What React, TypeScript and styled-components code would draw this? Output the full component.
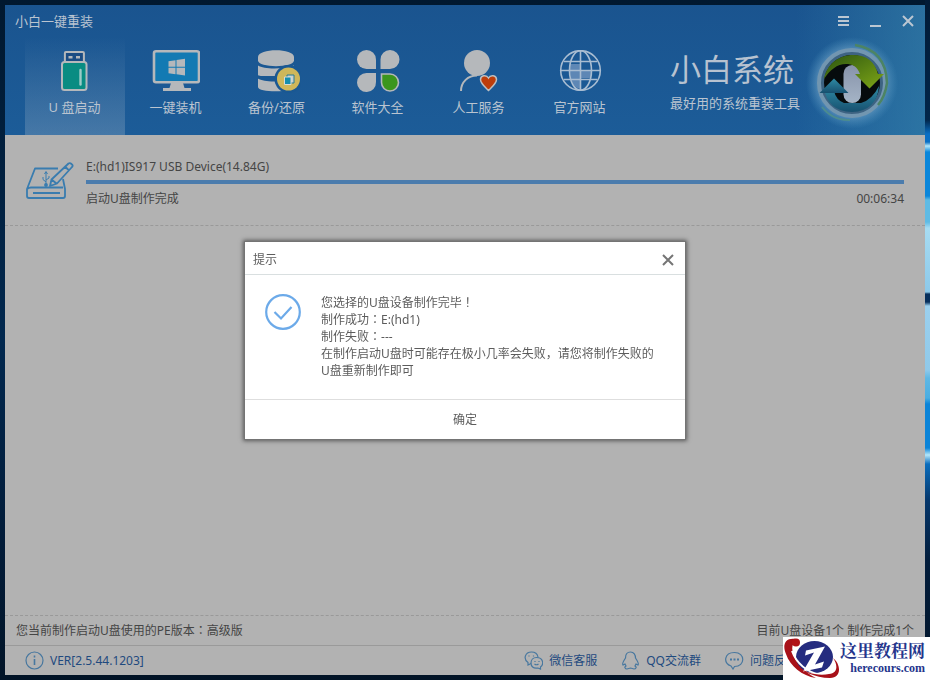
import React from 'react';
import styled, { createGlobalStyle } from 'styled-components';

const GlobalStyle = createGlobalStyle`
  * { box-sizing: border-box; }
  body {
    margin: 0;
    font-family: "Noto Sans", "Noto Sans CJK SC", sans-serif;
    font-size: 12px;
    line-height: 17px;
    color: #454545;
  }
  button { font: inherit; color: inherit; background: none; border: 0; padding: 0; cursor: pointer; }
  svg { display: block; flex: none; }
`;

const Desktop = styled.div`
  min-height: 100vh;
  display: flex;
  padding: 5px;
  background:
    linear-gradient(180deg, #021b36 0, #02264a 120px, #0a6fc4 134px, #0a6fc4 142px, #b5e8fb 146px, #0a86da 152px,
      #0a86da 196px, #5fbbe4 200px, #5fbbe4 222px, #a7dcf2 228px, #8cc9ea 292px, #062f5c 294px, #062f5c 302px,
      #9bd0ee 306px, #8fc9ea 370px, #5fb8e4 378px, #4aaee2 398px, #0b84d8 404px, #0b84d8 448px, #b5e8fb 455px,
      #0a6dbd 464px, #05376c 500px, #021d3c 560px, #021427 680px) right / 5px 100% no-repeat,
    linear-gradient(180deg, #01182f, #01284f 50%, #011b38 80%, #021427);
`;

const Window = styled.main`
  flex: 1;
  display: flex;
  flex-direction: column;
  background: #b2b2b2;
`;

const Header = styled.header`
  background: linear-gradient(90deg, transparent 86%, rgba(60, 140, 175, 0.5)), linear-gradient(180deg, #1a548f, #1c5c98);
  color: #bac4d0;
`;

const TitleBar = styled.div`
  display: flex;
  align-items: center;
  justify-content: space-between;
  height: 32px;
  padding: 0 9px 0 10px;
  font-size: 13px;
`;

const WindowButtons = styled.div`
  display: flex;
  gap: 16px;
`;

const IconButton = styled.button`
  width: 16px;
  height: 16px;
  display: grid;
  place-items: center;
`;

const HeaderMain = styled.div`
  display: flex;
  justify-content: space-between;
  padding: 0 25px 0 20px;
`;

const Nav = styled.nav`
  display: flex;
  gap: 1px;
`;

const NavButton = styled.button<{ $active?: boolean }>`
  width: 100px;
  height: 98px;
  padding: 13px 1px 0 0;
  display: flex;
  flex-direction: column;
  align-items: center;
  justify-content: flex-start;
  gap: 5px;
  font-size: 13px;
  line-height: 18px;
  background: ${p => (p.$active ? 'linear-gradient(180deg, rgba(190,200,210,0), rgba(190,200,210,0.26))' : 'none')};
`;

const Brand = styled.div`
  display: flex;
  gap: 2px;
`;

const BrandText = styled.div`
  padding-top: 13px;
`;

const BrandName = styled.div`
  font-size: 31px;
  line-height: 38px;
  color: #b7c2d0;
`;

const Slogan = styled.div`
  margin-top: 6px;
  font-size: 13px;
  line-height: 18px;
`;

const Device = styled.section`
  display: flex;
  gap: 12px;
  height: 91px;
  padding: 23px 21px 0 21px;
  border-bottom: 1px dashed #999;
`;

const DeviceIcon = styled.div`
  padding-top: 4px;
`;

const DeviceInfo = styled.div`
  flex: 1;
`;

const Progress = styled.progress`
  display: block;
  appearance: none;
  width: 100%;
  height: 4px;
  margin: 5px 0 6px;
  border: 0;
  &::-webkit-progress-bar { background: #999; }
  &::-webkit-progress-value { background: #4b7cad; }
`;

const Split = styled.div`
  display: flex;
  justify-content: space-between;
`;

const Workspace = styled.div`
  flex: 1;
`;

const StatusRow = styled(Split)`
  height: 31px;
  padding: 0 11px;
  align-items: center;
  border-top: 1px dashed #999;
  border-bottom: 1px solid #9a9a9a;
`;

const FullWidthMark = styled.span`
  font-family: "Noto Sans CJK JP", sans-serif;
  line-height: 1;
`;

const Footer = styled.footer`
  display: flex;
  justify-content: space-between;
  align-items: center;
  height: 29px;
  padding: 0 127px 0 20px;
  color: #1f4a7f;
`;

const FooterLinks = styled.div`
  display: flex;
  gap: 24px;
`;

const FooterLink = styled.a`
  display: flex;
  align-items: center;
  gap: 6px;
  color: inherit;
  text-decoration: none;
`;

const Overlay = styled.div`
  position: fixed;
  inset: 0;
  display: flex;
  align-items: center;
  justify-content: center;
  padding-top: 1px;
`;

const Dialog = styled.section`
  width: 442px;
  background: #fff;
  border: 1px solid #747474;
  box-shadow: 0 0 4px 1px rgba(0, 0, 0, 0.5);
  color: #5c5c5c;
`;

const DialogHeader = styled.div`
  display: flex;
  justify-content: space-between;
  align-items: center;
  height: 33px;
  padding: 3px 9px 0 8px;
  border-bottom: 1px solid #d9dfe0;
`;

const DialogTitle = styled.h2`
  margin: 0;
  font-size: 12px;
  font-weight: 400;
`;

const DialogBody = styled.div`
  display: flex;
  gap: 20px;
  padding: 19px 28px 20px 20px;
`;

const Message = styled.div`
  flex: 1;
`;

const Line = styled.p`
  margin: 0;
`;

const ConfirmButton = styled.button`
  display: block;
  width: 100%;
  height: 40px;
  border-top: 1px solid #dedede;
`;

const Watermark = styled.aside`
  position: fixed;
  right: 0;
  bottom: 0;
  display: flex;
  justify-content: space-between;
  width: 147px;
  height: 43px;
  padding-right: 5px;
  background: #fff;
  color: #24358c;
`;

const WatermarkText = styled.div`
  padding-top: 3px;
  display: flex;
  flex-direction: column;
  align-items: flex-end;
`;

const WatermarkName = styled.div`
  font: 700 17px/20px "Noto Serif CJK SC", "Noto Sans CJK SC", serif;
`;

const WatermarkUrl = styled.div`
  font: 700 12px/16px "Liberation Serif", serif;
`;

const NavSvg = ({ children }: { children: React.ReactNode }) => (
  <svg width="48" height="43" viewBox="0 0 48 43" fill="#b5b8bb">{children}</svg>
);

const UsbIcon = () => (
  <NavSvg>
    <rect x="13.9" y="2" width="19" height="12" rx="1" fill="#1b4c83" stroke="#b5b8bb" strokeWidth="2" />
    <rect x="17.5" y="6" width="4" height="2.5" /><rect x="25" y="6" width="4" height="2.5" />
    <rect x="11" y="12" width="24.5" height="28" rx="2.5" fill="#098c82" stroke="#b5b8bb" strokeWidth="2" />
    <path d="M29.5 20v14.5" stroke="#9ccbc7" strokeWidth="2.4" strokeLinecap="round" />
  </NavSvg>
);

const MonitorIcon = () => (
  <NavSvg>
    <rect x="2" y="1.3" width="45" height="31" rx="2" fill="#137ab3" stroke="#b5b8bb" strokeWidth="2.6" />
    <path d="M16.5 11.2l7-1v6.5h-7zM24.5 10l8.500-1.200v7.900h-8.500zM16.5 17.700h7v6.500l-7-1zM24.5 17.700H33v7.800l-8.500-1.200z" />
    <path d="M19 33h12l1.500 5H39v3H11v-3h6.500z" />
  </NavSvg>
);

const BackupIcon = () => (
  <NavSvg>
    <path d="M5 7c0-9 36-9 36 0v3.500c0 7.500-36 7.500-36 0z" />
    <path d="M5 15.500c6 4 25 4 36 0V26H5z" />
    <path d="M5 28.500c6 4 25 4 31 0v11.500c-8 2-31 2-31-3z" />
    <path d="M4 25q15 5.500 33 0v3q-18 5-33 0z" fill="#1a5893" />
    <circle cx="35.500" cy="29" r="14" fill="#1a5893" />
    <circle cx="35.500" cy="29" r="11.500" fill="#cfb75a" />
    <path d="M34 25h7v8h-7z" fill="#cbd1cd" stroke="#257b96" />
    <path d="M31.500 27h6.500v7.500h-6.500z" fill="#148eae" stroke="#d5dbd7" />
  </NavSvg>
);

const CloverIcon = () => (
  <NavSvg>
    <path d="M12.500 0a9.500 9.500 0 0 1 9.500 9.500V19h-9.500a9.500 9.500 0 0 1 0-19z" />
    <path d="M36 0a9.500 9.500 0 0 1 0 19h-9.500V9.500A9.500 9.500 0 0 1 36 0z" />
    <path d="M12.500 23H22v9a9.500 9.500 0 1 1-9.500-9z" />
    <path d="M27.500 24H36a8.500 8.500 0 1 1-8.500 8.500z" fill="#3b961e" stroke="#b5b8bb" strokeWidth="1.600" />
  </NavSvg>
);

const ServiceIcon = () => (
  <NavSvg>
    <circle cx="22" cy="13" r="13" />
    <path d="M6 41c0-9 7-15.500 16-15.500" fill="none" stroke="#b5b8bb" strokeWidth="2" />
    <path d="M33.500 40.500c-4-4-8-7-8-11 0-4.500 6-5 8-1.500 2-3.500 8-3 8 1.500 0 4-4 7-8 11z" fill="#bd3d0b" stroke="#bdbfc0" strokeWidth="1.500" />
  </NavSvg>
);

const GlobeIcon = () => (
  <NavSvg>
    <path d="M14 14h11v7h10v7H25v11c-7 0-12-9-11-25z" fill="#5e87b5" />
    <g fill="none" stroke="#a9bdd2" strokeWidth="1.600">
      <circle cx="24.500" cy="20.500" r="19.800" /><ellipse cx="24.500" cy="20.500" rx="11" ry="19.800" />
      <path d="M24.500 1v39M5 20.500h39M8 11.500h33M8 29.500h33" />
    </g>
  </NavSvg>
);

const BrandLogo = () => (
  <svg width="98" height="98" viewBox="0 4 98 98">
    <defs>
      <radialGradient id="halo">
        <stop offset="0.650" stopColor="#7fb0cf" stopOpacity="0.800" />
        <stop offset="0.780" stopColor="#6aa0c6" stopOpacity="0.500" />
        <stop offset="1" stopColor="#4e95c0" stopOpacity="0" />
      </radialGradient>
      <linearGradient id="leaf" x2="1" y2="1"><stop stopColor="#2b5510" /><stop offset="1" stopColor="#7fa617" /></linearGradient>
      <linearGradient id="sea" x2="0" y2="1"><stop stopColor="#2f8ba5" /><stop offset="1" stopColor="#17506f" /></linearGradient>
      <linearGradient id="zero" x2="0" y2="1"><stop stopColor="#8793aa" /><stop offset="1" stopColor="#a5b4c6" /></linearGradient>
    </defs>
    <circle cx="50" cy="50" r="46" fill="url(#halo)" />
    <circle cx="50" cy="50" r="33" fill="#3d6382" stroke="#7296b0" strokeWidth="4" />
    <path d="M53 12q31 5 32 38-2 14-9 22" fill="none" stroke="#4c8464" strokeWidth="2.500" />
    <path d="M20 74q11 14 28 13" fill="none" stroke="#4c8c8f" strokeWidth="2" />
    <circle cx="50" cy="50" r="28" fill="#060b0d" />
    <path d="M22 55q3 23 28 24 25-1 27-26-7 14-18 17H42q-8-3-10-12z" fill="url(#sea)" />
    <rect x="41.500" y="32" width="17.500" height="38" rx="8.700" fill="url(#zero)" />
    <path d="M32 45.500L17.500 60h29z" fill="url(#sea)" />
    <path d="M22 46c3-16 16-24 29-24 14 0 22 7 25 19h6L67.500 55.500 53 41h5c-3-8-8-10-14-10-9 0-16 6-22 15z" fill="url(#leaf)" />
  </svg>
);

const DriveIcon = () => (
  <svg width="48" height="40" viewBox="0 0 48 40" fill="none" stroke="#397caf" strokeWidth="1.800" strokeLinejoin="round">
    <path d="M32 6.500H9L1 27v7q0 2 2 2h34q2 0 2-2v-7L37 17M1 27q2-1.500 4-1.500h32M7 31h27" />
    <path d="M42.500 1.500q1.500-1 3 .5 2 1.500.5 3L31 21.500l-7 2.500 1.500-6.500zM39.500 5l4 4M25.500 17.500l5 4" />
    <path d="M20 23V10m-1.500 2l1.500-2.500 1.500 2.500M20 20l-3-2.500V15m3 3l3-2v-2" strokeWidth="1" />
    <circle cx="20" cy="23" r="1" />
  </svg>
);

const FooterSvg = ({ children }: { children: React.ReactNode }) => (
  <svg width="19" height="19" viewBox="0 0 19 19" fill="none" stroke="#47779f" strokeWidth="1.200">{children}</svg>
);

const CloseGlyph = ({ color }: { color: string }) => (
  <svg width="12" height="12" viewBox="0 0 12 12" stroke={color} strokeWidth="2"><path d="M1 1l10 10M11 1L1 11" /></svg>
);

const tools = [
  { label: 'U 盘启动', icon: <UsbIcon /> },
  { label: '一键装机', icon: <MonitorIcon /> },
  { label: '备份/还原', icon: <BackupIcon /> },
  { label: '软件大全', icon: <CloverIcon /> },
  { label: '人工服务', icon: <ServiceIcon /> },
  { label: '官方网站', icon: <GlobeIcon /> },
];

export default function App() {
  return (
    <>
      <GlobalStyle />
      <Desktop>
        <Window>
          <Header>
            <TitleBar>
              <span>小白一键重装</span>
              <WindowButtons>
                <IconButton aria-label="菜单">
                  <svg width="12" height="12" stroke="#bcc7d2" strokeWidth="2"><path d="M0 2h11M0 6h11M0 10h11" /></svg>
                </IconButton>
                <IconButton aria-label="最小化">
                  <svg width="12" height="12" stroke="#bcc7d2" strokeWidth="2"><path d="M0 11h11" /></svg>
                </IconButton>
                <IconButton aria-label="关闭"><CloseGlyph color="#bcc7d2" /></IconButton>
              </WindowButtons>
            </TitleBar>
            <HeaderMain>
              <Nav>
                {tools.map((tool, i) => (
                  <NavButton key={tool.label} $active={i === 0}>
                    {tool.icon}
                    {tool.label}
                  </NavButton>
                ))}
              </Nav>
              <Brand>
                <BrandText>
                  <BrandName>小白系统</BrandName>
                  <Slogan>最好用的系统重装工具</Slogan>
                </BrandText>
                <BrandLogo />
              </Brand>
            </HeaderMain>
          </Header>

          <Device>
            <DeviceIcon><DriveIcon /></DeviceIcon>
            <DeviceInfo>
              <label htmlFor="progress">E:(hd1)IS917 USB Device(14.84G)</label>
              <Progress id="progress" value={100} max={100} />
              <Split>
                <span>启动U盘制作完成</span>
                <span>00:06:34</span>
              </Split>
            </DeviceInfo>
          </Device>

          <Workspace />

          <StatusRow>
            <span>您当前制作启动U盘使用的PE版本<FullWidthMark>：</FullWidthMark>高级版</span>
            <span>目前U盘设备1个 制作完成1个</span>
          </StatusRow>
          <Footer>
            <FooterLink href="#version">
              <FooterSvg>
                <circle cx="9.500" cy="9.500" r="8.500" />
                <path d="M9.500 8v6M9.500 4.500v2" strokeWidth="1.600" />
              </FooterSvg>
              VER[2.5.44.1203]
            </FooterLink>
            <FooterLinks>
              <FooterLink href="#wechat">
                <FooterSvg>
                  <path d="M7 12.500l-3 1.500v-2.500C-1 8 1 1 7.500 1c4 0 6 2.500 6.500 5" />
                  <path d="M12.500 6.500c7 0 7.500 7 4 9.500v2l-2.500-1c-5 1-7-2-7-5 0-3 2-5.500 5.500-5.500z" />
                  <path d="M5 4.500v1M9.500 4.500v1M11 10v1M15 10v1M10.500 13q2 1.500 4 0" />
                </FooterSvg>
                微信客服
              </FooterLink>
              <FooterLink href="#qq">
                <FooterSvg>
                  <path d="M9.500 1C6 1 4.500 4 4.500 7c-2 3-3.500 6-2.500 7l2-1 1 2c-2 1-1 3 1 3l3.500-1 3.500 1c2 0 3-2 1-3l1-2 2 1c1-1-.5-4-2.500-7 0-3-1.500-6-5-6z" />
                </FooterSvg>
                QQ交流群
              </FooterLink>
              <FooterLink href="#feedback">
                <FooterSvg>
                  <path d="M9.500 1.500c11 0 11 14 0 14l-1.500 2.500-2-3C-2 12-1 1.500 9.500 1.500z" />
                  <path d="M5 8.500h2M8.500 8.500h2M12 8.500h2" strokeWidth="2" />
                </FooterSvg>
                问题反馈
              </FooterLink>
            </FooterLinks>
          </Footer>
        </Window>
      </Desktop>

      <Overlay>
        <Dialog role="dialog" aria-modal="true" aria-labelledby="dialog-title">
          <DialogHeader>
            <DialogTitle id="dialog-title">提示</DialogTitle>
            <IconButton aria-label="关闭提示"><CloseGlyph color="#757575" /></IconButton>
          </DialogHeader>
          <DialogBody>
            <svg width="36" height="36" viewBox="0 0 36 36" fill="none" stroke="#6caae9" strokeWidth="2.200">
              <circle cx="18" cy="18" r="16.800" />
              <path d="M9.500 18l6.500 6.500L26.500 13" />
            </svg>
            <Message>
              <Line>您选择的U盘设备制作完毕<FullWidthMark>！</FullWidthMark></Line>
              <Line>制作成功<FullWidthMark>：</FullWidthMark>E:(hd1)</Line>
              <Line>制作失败<FullWidthMark>：</FullWidthMark>---</Line>
              <Line>在制作启动U盘时可能存在极小几率会失败，请您将制作失败的U盘重新制作即可</Line>
            </Message>
          </DialogBody>
          <ConfirmButton>确定</ConfirmButton>
        </Dialog>
      </Overlay>

      <Watermark>
        <svg width="57" height="43" viewBox="0 0 57 43">
          <path d="M13 2C2 0-1 8 3 17c4 12 16 22 30 24C23 36 12 26 10 16 8 9 10 5 15 6z" fill="#a81119" />
          <circle cx="13" cy="5.500" r="4" fill="#b11218" />
          <ellipse cx="31.500" cy="20" rx="18.500" ry="16" fill="#252c7f" />
          <path d="M9 14c4 11 13 20 28 24" fill="none" stroke="#fff" strokeWidth="2" />
          <path d="M23 13.500l19-4-10 18 9-3-2 6-19 4 11-19-9 3z" fill="#fff" />
          <path d="M10 25c11 12 26 14 36 12 9-1 9-9 4-16 8 6 9 20-3 20-15 0-29-7-37-16z" fill="#a81119" />
        </svg>
        <WatermarkText>
          <WatermarkName>这里教程网</WatermarkName>
          <WatermarkUrl>herecours.com</WatermarkUrl>
        </WatermarkText>
      </Watermark>
    </>
  );
}
